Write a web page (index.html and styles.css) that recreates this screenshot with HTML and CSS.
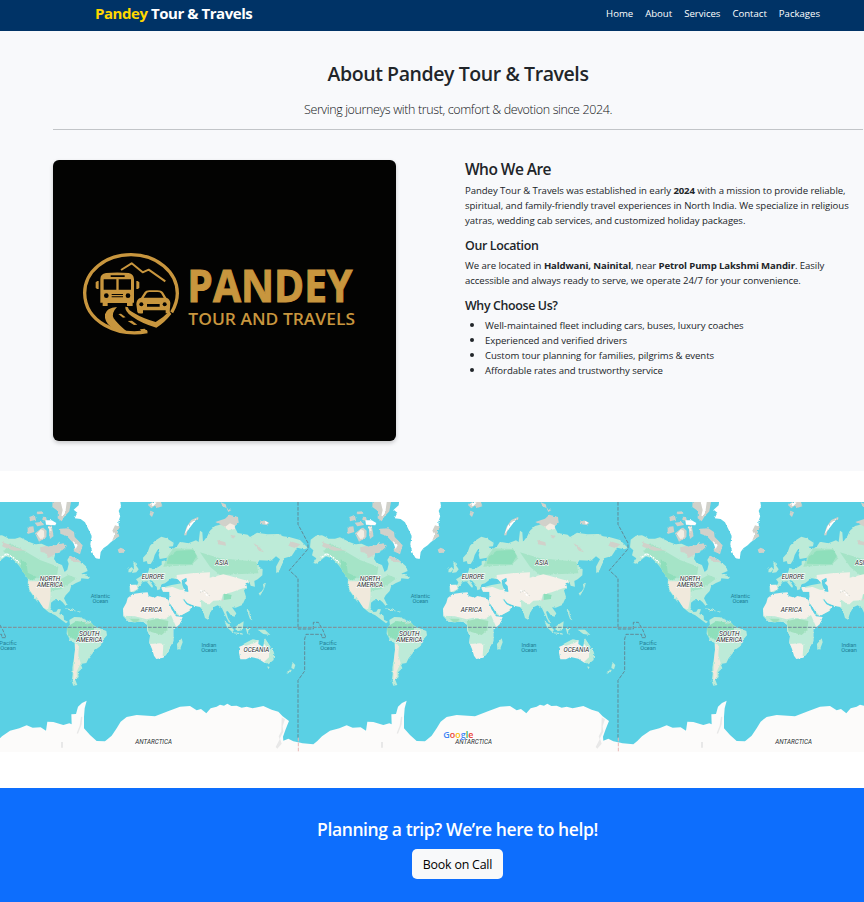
FILE: index.html
```html
<!DOCTYPE html>
<html lang="en">
<head>
<meta charset="utf-8">
<title>About Pandey Tour &amp; Travels</title>
<link rel="stylesheet" href="styles.css">
</head>
<body>
<nav class="navbar">
  <a class="brand"><span class="brand-accent">Pandey</span> Tour &amp; Travels</a>
  <ul class="nav-links">
    <li>Home</li><li>About</li><li>Services</li><li>Contact</li><li>Packages</li>
  </ul>
</nav>

<section class="about">
  <header class="about-head">
    <h2>About Pandey Tour &amp; Travels</h2>
    <p class="lead">Serving journeys with trust, comfort &amp; devotion since 2024.</p>
  </header>
  <div class="about-row">
    <div class="logo-card">
      <svg width="343" height="281" viewBox="0 0 1029 843" role="img" aria-label="Pandey Tour and Travels">
        <g transform="translate(-39,-30)" fill="#c8963e">
          <path d="M322,545 C232,561 135,516 134,429 C134,364 196,314 273,314 C350,314 412,366 412,430 C412,450 405,470 395,487" fill="none" stroke="#c8963e" stroke-width="10"/>
          <path d="M243,360 L275,340 L308,367 L326,359 L376,394" fill="none" stroke="#c8963e" stroke-width="6" stroke-linejoin="round"/>
          <path d="M181,388 Q181,371 198,369 Q232,366 266,369 Q281,371 282,388 L282,458 H278 V468 H261 V459 H203 V468 H188 V458 H181 Z"/>
          <path d="M167,397 l5,-4 h4 v24 h-5 l-4,-4z M289,393 h4 l5,4 v16 l-4,4 h-5z"/>
          <path d="M212,376 h42 v5 h-42z M191,388 h38 v31 h-38z M236,388 h37 v31 h-37z M215,432 h34 v3 h-34z M215,439 h34 v3 h-34z" fill="#030302"/>
          <circle cx="199" cy="437" r="7" fill="#030302"/><circle cx="264" cy="437" r="7" fill="#030302"/>
          <path d="M289,463 Q289,446 303,443 L314,426 Q317,421 328,421 H352 Q365,421 369,427 L379,443 Q390,447 391,459 L389,486 Q388,490 377,490 V481 H309 V490 Q293,492 292,486 Z"/>
          <path d="M311,443 L321,428 Q324,426 329,426 H353 Q360,426 363,430 L371,443 Z M321,462 h38 v8 h-38z" fill="#030302"/>
          <circle cx="304" cy="463" r="6" fill="#030302"/><circle cx="374" cy="463" r="6" fill="#030302"/>
          <path d="M231,471 Q199,474 195,493 Q192,516 214,532 Q228,543 262,546 Q233,522 221,505 Q213,490 231,471 Z"/>
          <path d="M256,470 Q254,483 275,499 Q307,522 349,533 Q374,518 394,492 L388,484 Q369,504 347,516 Q308,505 282,489 Q265,481 264,472 Z"/>
          <path d="M235,492 l8,-1 14,11 -8,1z M263,513 l13,-1 16,12 -10,1z M300,538 l14,-2 9,9 -16,4z"/>
          <text class="logo-name" x="442" y="455" textLength="495" lengthAdjust="spacingAndGlyphs">PANDEY</text>
          <text class="logo-sub" x="445" y="524" textLength="500" lengthAdjust="spacingAndGlyphs">TOUR AND TRAVELS</text>
        </g>
      </svg>
    </div>
    <div class="about-text">
      <h4>Who We Are</h4>
      <p>Pandey Tour &amp; Travels was established in early <b>2024</b> with a mission to provide reliable,<br>spiritual, and family-friendly travel experiences in North India. We specialize in religious<br>yatras, wedding cab services, and customized holiday packages.</p>
      <h5>Our Location</h5>
      <p>We are located in <b>Haldwani, Nainital</b>, near <b>Petrol Pump Lakshmi Mandir</b>. Easily<br>accessible and always ready to serve, we operate 24/7 for your convenience.</p>
      <h5>Why Choose Us?</h5>
      <ul>
        <li>Well-maintained fleet including cars, buses, luxury coaches</li>
        <li>Experienced and verified drivers</li>
        <li>Custom tour planning for families, pilgrims &amp; events</li>
        <li>Affordable rates and trustworthy service</li>
      </ul>
    </div>
  </div>
</section>

<section class="map">
  <svg width="864" height="250" viewBox="0 0 864 250">
    <defs>
      <filter id="coast" filterUnits="userSpaceOnUse" x="-10" y="0" width="1010" height="800">
        <feTurbulence type="fractalNoise" baseFrequency="0.12" numOctaves="2" seed="4" result="n"/>
        <feDisplacementMap in="SourceGraphic" in2="n" scale="7" xChannelSelector="R" yChannelSelector="G"/>
      </filter>
      <clipPath id="land"><use href="#america"/><use href="#eurasia"/><use href="#africa"/><use href="#samerica"/></clipPath>
      <path id="america" d="M32,134 L48,122 66,121 88,131 105,131 120,127 150,142 166,148 185,146 205,155 230,150 238,140 246,158 240,172 226,176 222,192 230,204 246,210 254,231 262,224 266,206 262,195 270,182 282,188 294,193 306,203 318,214 323,228 304,236 314,240 330,246 325,252 304,250 302,258 288,264 274,272 269,288 257,301 252,310 260,326 257,333 248,322 240,315 222,316 213,323 212,339 220,351 229,350 234,342 243,343 238,357 251,362 252,374 264,380 258,385 244,374 226,361 206,352 190,338 177,318 167,303 174,323 162,307 148,286 143,269 144,252 132,235 122,218 111,205 95,190 78,184 62,196 48,206 40,204 49,190 36,181 40,166 30,157 Z"/>
      <path id="samerica" d="M268,375 L283,366 300,367 317,374 333,382 340,391 355,398 379,408 381,421 368,436 362,453 346,464 337,476 326,490 319,504 302,507 307,520 294,532 296,546 286,555 292,570 280,572 275,558 278,538 277,518 282,488 285,464 284,445 270,434 260,416 261,400 270,390 Z"/>
      <path id="eurasia" d="M449,269 L472,269 475,262 468,253 479,246 493,237 505,230 508,218 516,223 524,222 536,215 545,209 545,199 560,195 561,188 539,192 536,180 540,165 533,164 524,180 520,194 512,207 503,207 500,198 490,201 489,188 502,174 510,152 525,137 544,125 560,130 581,143 579,154 566,155 574,165 591,154 600,140 625,145 648,136 656,141 660,107 667,112 669,141 682,124 689,108 705,93 726,88 742,97 767,102 773,114 803,119 810,126 831,113 862,118 896,117 909,124 930,127 960,135 984,159 973,163 951,158 935,183 912,190 906,207 899,225 890,235 888,215 900,193 888,184 873,197 838,196 830,209 848,223 847,241 833,253 823,258 825,275 812,272 808,261 796,265 801,277 792,286 798,306 787,330 767,338 756,337 769,355 764,365 754,362 743,348 738,350 744,370 754,385 746,382 735,360 726,340 713,331 700,337 690,353 684,374 675,369 668,344 658,335 642,332 623,325 614,315 607,311 619,328 634,335 629,347 600,363 590,359 578,336 565,320 569,305 568,291 549,291 544,280 556,275 575,270 588,268 603,265 594,253 574,250 565,257 555,265 545,268 540,283 532,286 528,271 517,258 508,254 519,274 516,279 499,259 488,261 482,270 474,283 461,292 449,290 Z"/>
      <path id="africa" d="M458,297 L484,293 503,292 506,303 524,308 532,303 560,309 566,319 574,342 588,364 608,366 599,388 580,405 580,439 571,453 565,471 550,488 529,492 522,482 516,462 508,443 510,424 502,407 501,389 488,379 465,382 446,380 430,363 429,341 439,323 443,309 Z"/>
      <g id="world">
        <g filter="url(#coast)">
          <g fill="#bdebd8">
            <use href="#america"/><use href="#samerica"/><use href="#eurasia"/>
            <path d="M456,234 l13,-2 7,-9 -8,-12 -2,-10 -7,2 3,13 -3,10z M446,223 l9,-7 5,6 -7,10 -8,0z M888,234 l5,-20 6,-17 10,-6 -2,15 -10,18z M840,302 l-4,-7 9,-6 6,-9 -2,-12 9,-6 -4,15 -5,11z"/>
          </g>
          <use href="#africa" fill="#f5f0e9"/>
          <g clip-path="url(#land)">
            <path fill="#a5e4c7" d="M90,145 L120,160 180,195 235,215 230,250 150,250 128,225 100,190 70,170Z M210,270 L265,240 290,250 245,282 210,288Z M560,188 L580,160 640,162 655,190 635,210 550,215Z M660,172 L720,190 830,200 835,235 720,240 690,215Z"/>
            <path fill="#8edfbb" d="M122,193 L140,205 143,233 170,246 158,256 140,250 122,218Z M566,185 L590,167 640,165 650,183 635,208 560,206Z M731,295 L755,300 752,312 731,315Z M260,396 L290,378 345,386 340,410 310,424 292,437 265,425Z"/>
            <path fill="#f0e9dc" d="M144,259 L180,259 212,280 211,310 204,345 190,338 163,304 150,286Z M284,445 L297,450 295,480 302,505 290,530 291,550 280,558 282,500Z"/>
            <path fill="#f5f0e9" d="M590,240 L635,235 690,232 689,248 730,238 772,249 806,259 801,276 780,283 755,292 729,298 724,316 700,317 680,335 650,335 622,324 610,310 620,325 635,335 628,349 600,364 575,335 562,311 568,290 550,290 544,280 578,276 600,284 610,285 606,263 590,252Z M448,270 l20,-2 5,14 -20,9z"/>
            <path fill="#d1d1ca" d="M180,157 L222,148 240,145 240,174 221,180 206,189 195,173 182,171Z M262,183 L283,184 306,202 278,201Z M820,145 l15,7 17,20 -15,-5z M712,135 l24,7 2,10 -24,-4z M932,139 l29,9 -14,12 -22,-8z M65,140 l45,18 30,8 -38,1 -30,-10z M751,119 l16,4 -8,8z"/>
            <path fill="#bdebd8" d="M428,362 L465,364 500,373 520,368 555,372 573,360 587,392 580,405 581,441 570,452 540,445 506,447 502,410 488,381 430,385Z"/>
            <path fill="#a0e0bd" d="M500,379 L532,371 565,378 562,405 545,420 506,409Z M449,371 h28 l5,9 -22,2z"/>
            <path fill="#bdebd8" d="M550,447 L578,442 562,480 548,484Z M662,313 l25,18 13,8 -17,28 -18,-22z"/>
            <path fill="#5ad0e4" d="M605,256 l14,-8 2,10 -7,6 9,9 2,18 -11,-2 -7,-18z M573,268 l-7,-12 13,-6 17,16z"/>
            <path fill="none" stroke="#fff" stroke-width="4" stroke-dasharray="7 3" d="M65,187 L80,176 98,186 122,207 M661,286 L675,294 685,305"/>
            <path fill="none" stroke="#d2d7d1" stroke-width="3" stroke-dasharray="4 3" d="M660,292 L675,286 690,304 M720,310 l12,6 M310,372 l8,15 12,-2"/>
          </g>
          <path fill="#f5f0e9" d="M778,455 L796,448 810,438 821,434 836,436 835,447 849,456 855,433 866,448 880,469 882,486 868,505 853,503 835,491 812,486 798,493 781,493 777,473Z"/>
          <path fill="#bdebd8" d="M851,445 l4,-15 13,20 15,26 -3,20 -15,12 -13,-7 15,-14 1,-21z M790,447 l28,-14 18,4 -12,7 -28,9z M862,514 l7,2 -4,7z M592,464 L591,447 605,430 608,442 600,463Z M732,376 L745,387 762,405 757,412 741,397Z M764,397 L779,386 791,379 788,405 773,409Z M797,399 l15,0 -8,9 6,11 -8,-3z M833,404 L855,404 871,420 850,417Z M760,412 l27,3 2,4 -27,-4z M937,501 l9,9 -4,13 -8,-4z M920,531 l17,-10 -5,10 -10,5z M800,344 l8,3 1,12 8,17 -7,-4z M252,340 l22,2 16,7 -18,-2z M291,348 l12,2 -7,3z"/>
          <path fill="#fff" d="M298,15 H420 L423,33 416,48 421,62 415,81 417,94 406,98 413,109 403,122 411,128 393,141 383,151 370,160 362,171 359,192 347,190 337,173 331,148 335,123 326,104 315,82 302,72 284,70 292,53 281,44 296,31Z"/>
          <path fill="#d1d1ca" d="M405,91 l15,4 -8,13 6,16 -22,14 8,-19 -7,-12z M218,15 h56 l-6,34 -14,15 -9,15 -12,-9 1,-22 -17,-12z M148,66 l16,-6 4,14 -18,5z M164,83 l23,-3 5,10 -20,4z M143,96 l17,-2 3,17 -20,6z M165,115 L188,97 200,107 199,127 177,140z M204,94 l11,-3 6,32 -11,9z M170,50 l18,-1 2,7 -18,2z M188,65 l10,1 3,12 -14,-3z M240,101 L265,100 282,111 284,126 308,151 300,178 278,167 290,154 274,138 260,123 241,116z M230,150 l20,-5 11,8 -16,14z M413,164 L422,158 436,164 433,173 417,174z M612,121 L620,95 634,75 654,66 656,70 636,84 624,101 619,121z M706,81 L735,71 748,59 774,66 776,83 765,94 735,96z M841,76 l17,2 10,6 -8,6 -20,-3z M503,29 l15,-8 25,0 4,13 -14,4 -9,-6 -10,8z M511,47 l11,5 -6,14 -7,-7z M722,22 l15,6 3,12 -12,-6z M740,40 l14,5 -9,6z"/>
          <path fill="#f4eee4" d="M170,117 L182,103 192,107 193,126 182,133z M734,97 L750,85 764,91 766,102 745,106z M206,96 l6,-1 3,12 -5,6z"/>
          <path fill="#fff" d="M241,16 h20 l-4,28 -7,20 -6,-2 4,-17z M196,76 h19 l14,8 -3,7 -28,-2z M614,116 L624,91 650,70 640,84 628,100z M510,28 l12,-7 8,2 -11,11z M278,137 l15,13 -6,12z M855,78 l10,5 -8,5z"/>
        </g>
        <path fill="#fcfbfa" d="M-10,744 L0,744 40,748 52,738 66,724 90,707 118,700 140,691 158,698 182,697 198,707 202,680 220,681 250,690 268,685 275,688 274,658 288,657 294,635 306,624 320,617 314,640 312,665 312,700 330,720 350,738 375,739 395,722 410,700 422,680 440,666 470,660 525,664 560,650 600,635 630,633 650,646 663,642 679,655 692,640 710,635 720,629 732,632 742,626 754,633 770,632 785,638 800,635 818,640 850,633 875,644 895,650 908,664 927,678 923,688 917,703 913,714 909,725 910,737 925,731 940,739 965,744 V785 H-10Z"/>
        <path fill="#e8e8e8" d="M303,665 l4,1 -2,22 -11,28 -4,-1 9,-23z M243,741 h6 v17 h-6z M905,667 l10,6 -7,21 2,16 -10,20 5,16 -13,15 -5,-5 12,-23 -3,-9 8,-15z"/>
      </g>
      <g id="grid" fill="none" stroke="#7e969f" stroke-width="3.5" stroke-dasharray="11 4">
        <path d="M-6,397 H954"/>
        <path stroke="#637f8a" stroke-width="2.6" d="M954,21 V88 L984,144 V162 L928,226 L954,250 V402 H1000 V382 H1015 L1028,404 L1038,428 H1025 V418 H978 L974,432 V528 L954,556 V728"/>
        <path stroke="#e8b8b8" stroke-width="3" d="M955,728 V771"/>
      </g>
      <g id="names" text-anchor="middle">
        <g class="continent">
          <text x="210" y="258" textLength="62" lengthAdjust="spacingAndGlyphs">NORTH</text><text x="210" y="276" textLength="78" lengthAdjust="spacingAndGlyphs">AMERICA</text>
          <text x="328" y="422" textLength="62" lengthAdjust="spacingAndGlyphs">SOUTH</text><text x="328" y="440" textLength="78" lengthAdjust="spacingAndGlyphs">AMERICA</text>
          <text x="519" y="252" textLength="68" lengthAdjust="spacingAndGlyphs">EUROPE</text><text x="725" y="211" textLength="40" lengthAdjust="spacingAndGlyphs">ASIA</text>
          <text x="514" y="350" textLength="64" lengthAdjust="spacingAndGlyphs">AFRICA</text><text x="829" y="472" textLength="77" lengthAdjust="spacingAndGlyphs">OCEANIA</text>
          <text x="521" y="748" textLength="110" lengthAdjust="spacingAndGlyphs">ANTARCTICA</text>
        </g>
        <g class="ocean">
          <text x="361" y="308" textLength="58">Atlantic</text><text x="361" y="323" textLength="47">Ocean</text>
          <text x="84" y="449" textLength="52">Pacific</text><text x="84" y="464" textLength="47">Ocean</text>
          <text x="687" y="455" textLength="45">Indian</text><text x="687" y="470" textLength="47">Ocean</text>
        </g>
      </g>
    </defs>
    <rect width="864" height="250" fill="#5ad0e4"/>
    <g transform="translate(300,-7) scale(.33333)">
      <use href="#world" x="-960"/><use href="#world"/><use href="#world" x="960"/>
      <use href="#grid" x="-1920"/><use href="#grid" x="-960"/><use href="#grid"/><use href="#grid" x="960"/>
      <use href="#names" x="-960"/><use href="#names"/><use href="#names" x="960"/>
      <text class="google" x="430" y="730" textLength="90" lengthAdjust="spacingAndGlyphs"><tspan fill="#4285f4">G</tspan><tspan fill="#ea4335">o</tspan><tspan fill="#fbbc05">o</tspan><tspan fill="#4285f4">g</tspan><tspan fill="#34a853">l</tspan><tspan fill="#ea4335">e</tspan></text>
    </g>
  </svg>
</section>

<section class="cta">
  <h4>Planning a trip? We’re here to help!</h4>
  <a class="btn">Book on Call</a>
</section>
</body>
</html>
```
FILE: styles.css
```css
* { box-sizing: border-box; }
body {
  margin: 0;
  font: 10px/15px "Open Sans", "Noto Sans", sans-serif;
  color: #212529;
  background: #fff;
  overflow: hidden;
}
h2, h4, h5, p, ul { margin: 0; }
h2, h4, h5 { font-weight: 600; }
.navbar {
  height: 31px;
  background: #003366;
  color: #fff;
  display: flex;
  justify-content: space-between;
  align-items: center;
  padding: 0 44px 4px 95px;
}
.brand { font-size: 15px; line-height: 20px; margin-top: -2px; font-weight: 700; letter-spacing: -.45px; white-space: nowrap; }
.brand-accent { color: #ffd700; }
.nav-links { display: flex; gap: 12px; list-style: none; padding: 0; font-weight: 500; font-size: 9.6px; letter-spacing: -.01px; }
.about { height: 440px; background: #f8f9fb; padding: 30px 1px 0 53px; }
.about-head { height: 69px; border-bottom: 1px solid #c2c5c8; text-align: center; }
.about-head h2 { font-size: 19.5px; line-height: 26px; letter-spacing: -.42px; }
.lead { margin-top: 13px; font-size: 12.5px; line-height: 19px; font-weight: 300; letter-spacing: -.38px; color: #111417; }
.about-row { display: flex; gap: 69px; padding-top: 31px; margin-top: -1px; }
.logo-card { width: 343px; height: 281px; flex: none; background: #030302; border-radius: 6px; overflow: hidden; box-shadow: 0 2px 4px rgba(0,0,0,.2); }
.logo-card svg { display: block; }
.logo-name { font: 700 134px/1 "Open Sans", sans-serif; stroke: #c8963e; stroke-width: 3px; }
.logo-sub { font: 600 51px/1 "Open Sans", sans-serif; }
.about-text { flex: 1; white-space: nowrap; letter-spacing: -.06px; font-size: 9.6px; }
.about-text h4 { font-size: 15.5px; line-height: 18px; margin-bottom: 5px; letter-spacing: -.55px; }
.about-text h5 { font-size: 12.4px; line-height: 15px; margin: 10px 0 5px; letter-spacing: -.35px; }
.about-text b { letter-spacing: -.12px; }
.about-text ul { padding-left: 20px; }
.about-text li { height: 15px; }
.about-text li::marker { font-size: 11px; line-height: 1; }
.map { padding: 31px 0 36px; }
.map svg { display: block; }
.continent { font: italic 400 20px Roboto, sans-serif; fill: #25292b; stroke: #fff; stroke-width: 4px; paint-order: stroke; stroke-linejoin: round; }
.ocean { font: 400 17px Roboto, sans-serif; fill: #1f7f94; }
.google { font: 600 27px "Open Sans", sans-serif; stroke: #fff; stroke-width: 2px; paint-order: stroke; }
.cta { height: 114px; background: #0d6efd; color: #fff; padding: 29px 0 0 51px; text-align: center; }
.cta h4 { font-size: 17.5px; line-height: 24px; margin-bottom: 8px; letter-spacing: -.4px; }
.btn { display: inline-flex; align-items: center; justify-content: center; width: 91px; height: 30px; border-radius: 5px; background: #f8f9fa; color: #000; font-size: 12.4px; letter-spacing: -.2px; white-space: nowrap; }
```
